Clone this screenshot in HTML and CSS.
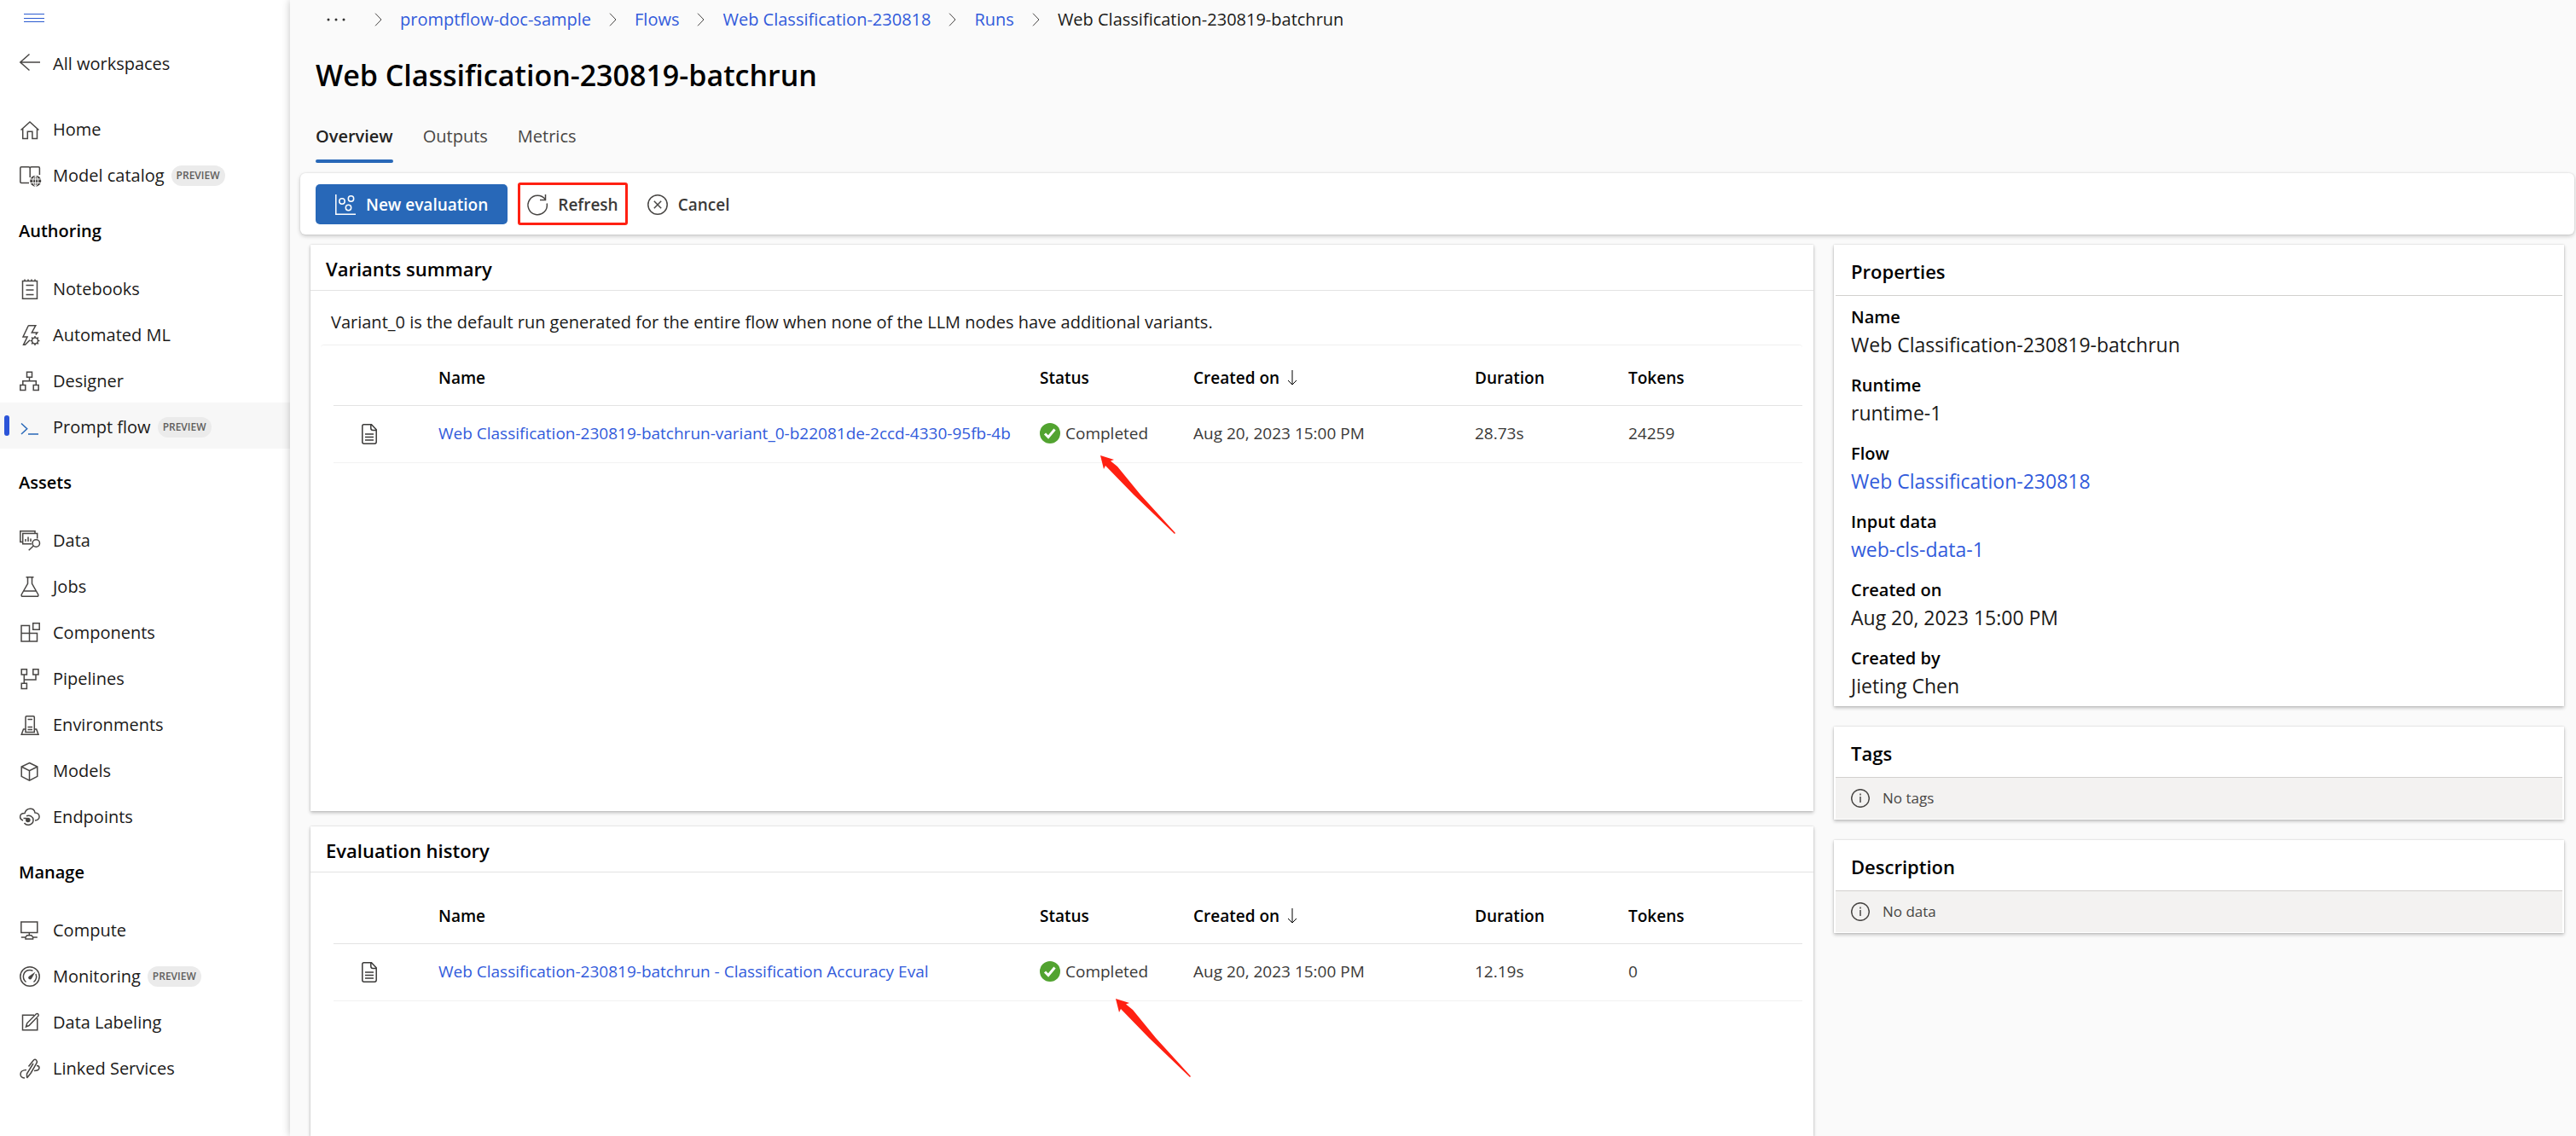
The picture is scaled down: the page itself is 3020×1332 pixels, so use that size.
FILE: index.html
```html
<!DOCTYPE html>
<html lang="en">
<head>
<meta charset="utf-8">
<title>Web Classification-230819-batchrun</title>
<link rel="stylesheet" href="styles.css">
</head>
<body>
<div class="app">
  <aside class="sidebar">
    <button class="menu-button" aria-label="Toggle navigation">
      <svg class="menu-icon" viewBox="0 0 24 12"><path d="M0 1.5h24M0 6.5h24M0 10.5h24"/></svg>
    </button>
    <nav class="nav">
      <a class="nav-item back" href="#"><svg class="icon" viewBox="0 0 24 24"><path d="M24 10H.8M11.5 .5L.8 10l10.7 9.500"/></svg>All workspaces</a>
      <a class="nav-item" href="#"><svg class="icon" viewBox="0 0 24 24"><path d="M1.500 12.500L12 3l10.500 9.500M3.700 11v11.500h5.600v-8.200h5.600v8.200h5.600V11"/></svg>Home</a>
      <a class="nav-item" href="#"><svg class="icon" viewBox="0 0 24 24"><path d="M11 20.500H2q-1.200 0-1.200-1.200V3q0-1.200 1.200-1.200h8.500q1.700 0 1.700 1.700 0-1.700 1.700-1.700h8.300q1.200 0 1.200 1.200v8M12.200 3.500V14"/><circle class="fill" cx="18.700" cy="18.200" r="6.500"/><path class="knock" d="M12 16h13.500M12 20.500h13.500M18.700 11.500v13.500M18.700 12c-4 3.500-4 9 0 12.500 4-3.500 4-9 0-12.500"/></svg>Model catalog<span class="pill">PREVIEW</span></a>

      <h2 class="nav-heading">Authoring</h2>
      <a class="nav-item" href="#"><svg class="icon" viewBox="0 0 24 24"><path d="M3.500 2.500h17v20.700h-17zM7.500 7.500h9M7.500 13h9M7.500 18.500h9M6 .5v2M10 .5v2M14 .5v2M18 .5v2"/></svg>Notebooks</a>
      <a class="nav-item" href="#"><svg class="icon" viewBox="0 0 24 24"><path d="M10.300 .7h8.500l-4.500 8.300h6.500l-2 2.500M10.300 .7L4 14h5L4.500 23.300h2l5.500-5.500"/><circle cx="18" cy="18.500" r="3.500"/><path d="M18 13v2M18 22v2M12.500 18.500h2M21.500 18.500h2M14.100 14.600l1.400 1.400M20.500 21l1.400 1.400M14.100 22.400l1.400-1.400M20.500 16l1.400-1.400"/></svg>Automated ML</a>
      <a class="nav-item" href="#"><svg class="icon" viewBox="0 0 24 24"><path d="M8.500 1.200h6v6h-6zM.8 16.500h6v6h-6zM16.200 16.500h6v6h-6zM11.500 7.200v4.500M3.800 16.500v-4.800h15.500v4.800"/></svg>Designer</a>
      <a class="nav-item selected" href="#" aria-current="page"><svg class="icon" viewBox="0 0 24 24"><path d="M2 7.500l6.700 6.200L2 20M10 20h12"/></svg>Prompt flow<span class="pill">PREVIEW</span></a>

      <h2 class="nav-heading">Assets</h2>
      <a class="nav-item" href="#"><svg class="icon" viewBox="0 0 24 24"><path d="M3.500 13.500H.8V.8H18v2.700M20.700 9.500V3.500h-17v12.200h10.300M7 13V10M10 13V7.500M13 13V9.500"/><circle cx="19.300" cy="15" r="4.200"/><path d="M16.300 18L10.700 23.300"/></svg>Data</a>
      <a class="nav-item" href="#"><svg class="icon" viewBox="0 0 24 24"><path d="M7.500 .8h9M9.500 .8v7.500L2.300 21q-.8 2.300 1.500 2.300h16.400q2.300 0 1.500-2.300L14.500 8.300V.8M5 17h14"/></svg>Jobs</a>
      <a class="nav-item" href="#"><svg class="icon" viewBox="0 0 24 24"><path d="M2 3.500h9.500v9H2zM2 12.500h18.500V22H2zM11.500 12.500V22M15.700 .8h7.500v7.500h-7.500z"/></svg>Components</a>
      <a class="nav-item" href="#"><svg class="icon" viewBox="0 0 24 24"><path d="M2.200 .8h6.200V7H2.200zM15.800 .8H22V7h-6.200zM2.200 17.200h6.200v6.200H2.200zM5.300 7v10.200M5.300 13H19V7"/></svg>Pipelines</a>
      <a class="nav-item" href="#"><svg class="icon" viewBox="0 0 24 24"><path d="M7 20.500V3q0-1.200 1.200-1.200h7.900q1.200 0 1.200 1.200v17.500zM9.500 5.500h5.500M9.500 14.500h5.500M9.500 17.500h5.500M7 17H4.500l-2.300 6.200h19.800L19.700 17h-2.400"/></svg>Environments</a>
      <a class="nav-item" href="#"><svg class="icon" viewBox="0 0 24 24"><path d="M11.500 2.500L20.800 7v11.300l-9.300 4.900-9.300-4.900V7zM2.200 7l9.300 4.700L20.800 7M11.500 11.700v11.500"/></svg>Models</a>
      <a class="nav-item" href="#"><svg class="icon" viewBox="0 0 24 24"><path d="M4 16C-1 14-.5 7.500 6 7.500 8 .5 17 .5 18 7c6.500 0 7 9 0 9M8 10.800c4-1.500 8 1 8 4.700 0 6-7.500 7.500-10.500 3.500M4.500 13.500h4"/><circle class="fill" cx="9.800" cy="15.500" r="2.800"/></svg>Endpoints</a>

      <h2 class="nav-heading">Manage</h2>
      <a class="nav-item" href="#"><svg class="icon" viewBox="0 0 24 24"><path d="M1.800 2h19v12.500h-19zM11.300 14.500v3M1.800 20h5l2-2.300h5l2 2.300h5M7 20v2h8.600v-2"/></svg>Compute</a>
      <a class="nav-item" href="#"><svg class="icon" viewBox="0 0 24 24"><circle cx="12" cy="12" r="11.200"/><path d="M7.500 18.500C2 14 4 4.500 12 4.500q2 0 3.500 .8M19 9c1.500 4 0 7.500-2.500 9.500"/><path class="fill" d="M18.500 6.500L14 14.500q-1.500 1.800-3.300 .3-1.500-1.600 .3-3.100z"/></svg>Monitoring<span class="pill">PREVIEW</span></a>
      <a class="nav-item" href="#"><svg class="icon" viewBox="0 0 24 24"><path d="M17 3.200H3.500v17.500h17.300V7M7.500 17l1.200-4.200L19.500 1.800q1.500-.8 2.300 .3t0 2.300L11 15.500z"/></svg>Data Labeling</a>
      <a class="nav-item" href="#"><svg class="icon" viewBox="0 0 24 24"><path d="M10.500 9.500L16 2.500q2-2 3.500-.5t.5 3.500L13 17.500l-4.500 5.500M8.500 22.500V18L16 6M8 13.500c-4 0-7 2-7 5s2.500 4.500 5 4.500M17 14.500c4.500 0 6-2 6-3.500s-1-2.500-3-2.500"/></svg>Linked Services</a>
    </nav>
  </aside>

  <main class="main">
    <nav class="breadcrumb" aria-label="Breadcrumb">
      <svg class="dots" viewBox="0 0 24 4"><circle cx="3" cy="2" r="1.500"/><circle cx="12" cy="2" r="1.500"/><circle cx="21" cy="2" r="1.500"/></svg>
      <svg class="chevron" viewBox="0 0 9 16"><path d="M1 .7L8 8l-7 7.300"/></svg>
      <a class="link" href="#">promptflow-doc-sample</a>
      <svg class="chevron" viewBox="0 0 9 16"><path d="M1 .7L8 8l-7 7.300"/></svg>
      <a class="link" href="#">Flows</a>
      <svg class="chevron" viewBox="0 0 9 16"><path d="M1 .7L8 8l-7 7.300"/></svg>
      <a class="link" href="#">Web Classification-230818</a>
      <svg class="chevron" viewBox="0 0 9 16"><path d="M1 .7L8 8l-7 7.300"/></svg>
      <a class="link" href="#">Runs</a>
      <svg class="chevron" viewBox="0 0 9 16"><path d="M1 .7L8 8l-7 7.300"/></svg>
      <span>Web Classification-230819-batchrun</span>
    </nav>

    <h1 class="title">Web Classification-230819-batchrun</h1>

    <div class="tabs" role="tablist">
      <button class="tab active" role="tab" aria-selected="true">Overview</button>
      <button class="tab" role="tab" aria-selected="false">Outputs</button>
      <button class="tab" role="tab" aria-selected="false">Metrics</button>
    </div>

    <div class="toolbar">
      <button class="button primary"><svg class="icon" viewBox="0 0 24 24"><path d="M.8 0v23.200H24"/><circle cx="8" cy="8" r="3.200"/><circle cx="18.500" cy="5" r="3.200"/><circle cx="15.500" cy="15.500" r="3.200"/></svg>New evaluation</button>
      <button class="button highlighted"><svg class="icon" viewBox="0 0 24 24"><path d="M21.500 6.300A11.200 11.200 0 1 0 23.200 10.500M21.500 0v6.500H15"/></svg>Refresh</button>
      <button class="button"><svg class="icon" viewBox="0 0 24 24"><circle cx="12" cy="12" r="11.200"/><path d="M7.800 7.800l8.400 8.400M16.200 7.800l-8.400 8.400"/></svg>Cancel</button>
    </div>

    <div class="content">
      <div class="column wide">
        <section class="panel variants">
          <h2 class="panel-title">Variants summary</h2>
          <p class="note">Variant_0 is the default run generated for the entire flow when none of the LLM nodes have additional variants.</p>
          <div class="table-box outlined">
            <table class="runs">
              <colgroup><col class="col-icon"><col><col class="col-status"><col class="col-created"><col class="col-duration"><col class="col-tokens"></colgroup>
              <thead>
                <tr><th></th><th>Name</th><th>Status</th><th>Created on<svg class="sort" viewBox="0 0 12 18"><path d="M6 0v17M1 12l5 5 5-5"/></svg></th><th>Duration</th><th>Tokens</th></tr>
              </thead>
              <tbody>
                <tr>
                  <td class="doc-cell"><svg class="doc" viewBox="0 0 18 24"><path d="M2.500 .8h9l5.700 6V21q0 2.200-2 2.200H2.800q-2 0-2-2V2.800q0-2 1.700-2zM10.800 .8V5q0 2.500 2.500 2.500h4M4 12h10M4 15.500h10M4 19h10"/></svg></td>
                  <td class="name"><a class="link" href="#">Web Classification-230819-batchrun-variant_0-b22081de-2ccd-4330-95fb-4b</a></td>
                  <td class="status"><span class="state"><svg class="check" viewBox="0 0 24 24"><circle cx="12" cy="12" r="12"/><path d="M6 12.500l4 4 7.500-9"/></svg>Completed</span><svg class="arrow" viewBox="0 0 88 92"><path d="M0 0L16 5 12 6.500 20 13 47 46 88 91 87 92 39 46 6 12 4 16z"/></svg></td>
                  <td>Aug 20, 2023 15:00 PM</td><td>28.73s</td><td>24259</td>
                </tr>
              </tbody>
            </table>
          </div>
        </section>

        <section class="panel history">
          <h2 class="panel-title">Evaluation history</h2>
          <div class="table-box">
            <table class="runs">
              <colgroup><col class="col-icon"><col><col class="col-status"><col class="col-created"><col class="col-duration"><col class="col-tokens"></colgroup>
              <thead>
                <tr><th></th><th>Name</th><th>Status</th><th>Created on<svg class="sort" viewBox="0 0 12 18"><path d="M6 0v17M1 12l5 5 5-5"/></svg></th><th>Duration</th><th>Tokens</th></tr>
              </thead>
              <tbody>
                <tr>
                  <td class="doc-cell"><svg class="doc" viewBox="0 0 18 24"><path d="M2.500 .8h9l5.700 6V21q0 2.200-2 2.200H2.800q-2 0-2-2V2.800q0-2 1.700-2zM10.800 .8V5q0 2.500 2.500 2.500h4M4 12h10M4 15.500h10M4 19h10"/></svg></td>
                  <td class="name"><a class="link" href="#">Web Classification-230819-batchrun - Classification Accuracy Eval</a></td>
                  <td class="status"><span class="state"><svg class="check" viewBox="0 0 24 24"><circle cx="12" cy="12" r="12"/><path d="M6 12.500l4 4 7.500-9"/></svg>Completed</span><svg class="arrow lower" viewBox="0 0 88 92"><path d="M0 0L16 5 12 6.500 20 13 47 46 88 91 87 92 39 46 6 12 4 16z"/></svg></td>
                  <td>Aug 20, 2023 15:00 PM</td><td>12.19s</td><td>0</td>
                </tr>
              </tbody>
            </table>
          </div>
        </section>
      </div>

      <div class="column side">
        <section class="panel inset">
          <h2 class="panel-title">Properties</h2>
          <dl class="properties">
            <div><dt>Name</dt><dd>Web Classification-230819-batchrun</dd></div>
            <div><dt>Runtime</dt><dd>runtime-1</dd></div>
            <div><dt>Flow</dt><dd><a class="link" href="#">Web Classification-230818</a></dd></div>
            <div><dt>Input data</dt><dd><a class="link" href="#">web-cls-data-1</a></dd></div>
            <div><dt>Created on</dt><dd>Aug 20, 2023 15:00 PM</dd></div>
            <div><dt>Created by</dt><dd>Jieting Chen</dd></div>
          </dl>
        </section>
        <section class="panel inset">
          <h2 class="panel-title">Tags</h2>
          <p class="empty"><svg class="info" viewBox="0 0 22 22"><circle cx="11" cy="11" r="10.300"/><path d="M11 9v7M11 5.500v2"/></svg>No tags</p>
        </section>
        <section class="panel inset">
          <h2 class="panel-title">Description</h2>
          <p class="empty"><svg class="info" viewBox="0 0 22 22"><circle cx="11" cy="11" r="10.300"/><path d="M11 9v7M11 5.500v2"/></svg>No data</p>
        </section>
      </div>
    </div>
  </main>
</div>
</body>
</html>
```
FILE: styles.css
```css
* { box-sizing: border-box; }

body {
  margin: 0;
  background: #fafafa;
  color: #1b1a19;
  font: 20px/30px "Open Sans", "Noto Sans", sans-serif;
}

h1, h2, p, dl, dd { margin: 0; }
svg { display: block; flex: none; fill: none; stroke: currentColor; stroke-width: 1.5; }
button { font: inherit; color: inherit; background: none; border: 0; padding: 0; }
a { color: inherit; text-decoration: none; }
.link { color: #325bdb; }

.app { display: flex; min-height: 100vh; }

/* Sidebar */
.sidebar { flex: none; width: 340px; background: #fff; }
.menu-button { display: block; height: 46px; padding: 0 28px 5px; color: #2b5bd0; }
.menu-icon { width: 24px; height: 12px; stroke-width: 1; }
.nav-item {
  display: flex;
  align-items: center;
  gap: 15px;
  height: 54px;
  padding: 3px 0 0 23px;
  position: relative;
}
.icon { width: 24px; height: 24px; overflow: visible; color: #484644; }
.icon .fill { fill: currentColor; stroke: none; }
.icon .knock { stroke: #fff; stroke-width: 1; }
.back { margin-bottom: 23px; }
.pill {
  margin-left: -7px;
  padding: 0 6px;
  border-radius: 12px;
  background: #ebebeb;
  color: #605e5c;
  font-size: 12px;
  font-weight: 600;
  line-height: 24px;
}
.selected { background: #f7f7f7; }
.selected .icon { color: #2868b8; }
.selected::before {
  content: "";
  position: absolute;
  left: 5px;
  top: 15px;
  width: 6px;
  height: 24px;
  border-radius: 3px;
  background: #2b54d8;
}
.nav-heading {
  padding-left: 22px;
  color: #000;
  font-size: 20px;
  font-weight: 600;
  line-height: 79px;
}

/* Page header */
.main {
  flex: 1;
  min-width: 0;
  display: flex;
  flex-direction: column;
  position: relative;
  padding-top: 8px;
  background: #fafafa;
  box-shadow: 0 0 9px rgba(0, 0, 0, .24);
}
.breadcrumb { display: flex; align-items: center; gap: 21px; padding-left: 42px; }
.dots { width: 24px; height: 4px; margin-right: 12px; fill: #323130; stroke: none; }
.chevron { width: 9px; height: 16px; color: #484644; stroke-width: 1; }
.title {
  margin: 27px 0 28px;
  padding-left: 30px;
  color: #000;
  font-size: 34px;
  font-weight: 600;
  line-height: 46px;
}
.tabs { display: flex; gap: 35px; padding-left: 30px; }
.tab { padding: 6px 0 16px; color: #484644; }
.active { padding-bottom: 0; color: #242322; font-weight: 600; }
.active::after {
  content: "";
  display: block;
  height: 4px;
  margin-top: 12px;
  border-radius: 2px;
  background: #2868b8;
}

/* Command bar */
.toolbar {
  display: flex;
  align-items: center;
  gap: 12px;
  height: 72px;
  margin: 12px 2px 12px 12px;
  padding-left: 18px;
  border-radius: 6px;
  background: #fff;
  box-shadow: 0 2px 5px rgba(0, 0, 0, .2), 0 0 2px rgba(0, 0, 0, .12);
}
.button {
  display: flex;
  align-items: center;
  gap: 12px;
  height: 47px;
  padding: 2px 11px 0;
  color: #3b3a39;
  font-size: 19px;
  font-weight: 600;
}
.primary { padding: 2px 23px 0; border-radius: 5px; background: #2868b8; color: #fff; }
.primary .icon { color: #fff; }
.highlighted { height: 50px; padding: 2px 8px 0; border: 3px solid #ff2012; border-radius: 3px; }

/* Content */
.content {
  flex: 1;
  display: grid;
  grid-template-columns: 1762fr 856fr;
  gap: 24px;
  padding: 0 14px 0 24px;
}
.column { display: flex; flex-direction: column; min-width: 0; }
.wide { gap: 18px; }
.side { gap: 24px; }
.panel {
  background: #fff;
  box-shadow: 0 2px 4px rgba(0, 0, 0, .24), 0 0 2px rgba(0, 0, 0, .14);
}
.panel-title {
  padding: 13px 18px 10px;
  border-bottom: 1px solid #e3e3e3;
  color: #000;
  font-size: 22px;
  font-weight: 600;
  line-height: 30px;
}
.variants { padding-bottom: 13px; }
.history { flex: 1; }
.note { padding: 22px 24px 11px; }
.table-box { margin: 0 13px 0 12px; padding-left: 15px; }
.outlined { min-height: 534px; border-top: 1px solid #f0f0f0; border-radius: 4px; }
.history .table-box { margin-top: 13px; }

.runs { width: 100%; table-layout: fixed; border-collapse: collapse; font-size: 19px; }
.col-icon { width: 123px; }
.col-status, .col-duration { width: 180px; }
.col-created { width: 330px; }
.col-tokens { width: 204px; }
.runs th {
  height: 70px;
  padding: 7px 0 0;
  border-bottom: 1px solid #e3e3e3;
  color: #000;
  font-weight: 600;
  text-align: left;
}
.runs td { height: 67px; padding: 0 0 2px; border-bottom: 1px solid #f2f2f2; color: #3b3a39; }
.runs .doc-cell { padding: 1px 0 0 33px; }
.doc { width: 18px; height: 24px; }
.runs .name { padding-right: 18px; overflow: hidden; white-space: nowrap; }
.name .link { display: block; overflow: hidden; }
.sort { display: inline-block; width: 12px; height: 18px; margin-left: 9px; vertical-align: -2px; stroke-width: 1; }
.status { position: relative; }
.state { display: flex; align-items: center; gap: 6px; }
.check { width: 24px; height: 24px; stroke: none; }
.check circle { fill: #52a330; }
.check path { stroke: #fff; stroke-width: 3; }
.arrow {
  position: absolute;
  left: 71px;
  top: 58px;
  z-index: 1;
  width: 88px;
  height: 92px;
  fill: #ff2012;
  stroke: none;
}
.lower { left: 89px; top: 64px; }

/* Side panels */
.inset { padding: 0 2px 1px; }
.inset .panel-title { padding: 16px 16px 13px 18px; border-color: #d2d0ce; }
.properties { display: grid; gap: 16px; padding: 10px 18px 6px; }
dt { color: #000; font-weight: 600; line-height: 30px; }
dd { font-size: 23px; line-height: 34px; }
.empty {
  display: flex;
  align-items: center;
  gap: 15px;
  height: 48px;
  padding-left: 18px;
  background: #f3f2f1;
  color: #484644;
  font-size: 17px;
}
.info { width: 22px; height: 22px; }
```
